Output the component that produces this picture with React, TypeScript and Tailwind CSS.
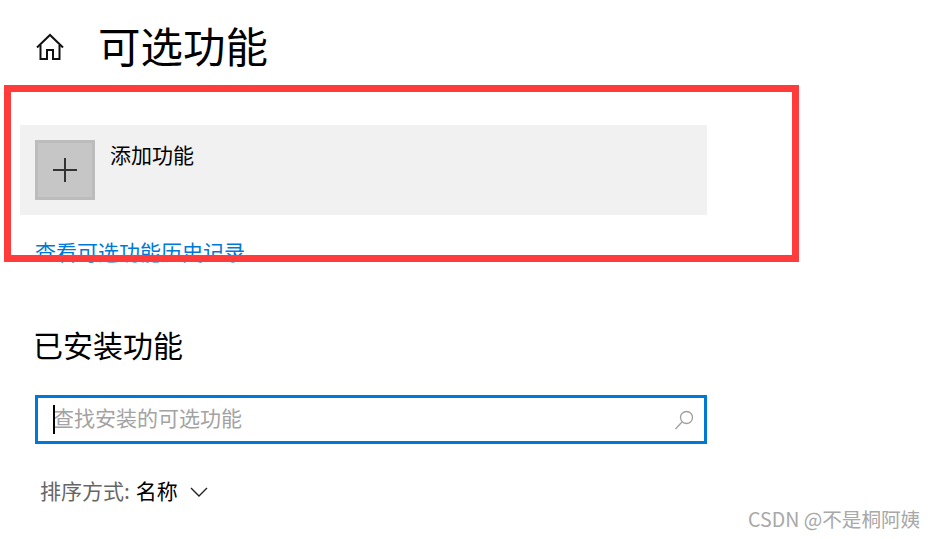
const cjk = "font-['Noto_Sans_CJK_SC','Noto_Sans',sans-serif]";

export default function App() {
  return (
    <div className={`relative w-[935px] h-[539px] overflow-hidden bg-white text-black ${cjk}`}>
      {/* Header */}
      <div className="flex items-center h-[94px] pl-[35px]">
        <svg width="30" height="30" viewBox="0 0 30 30" fill="none" stroke="#111" strokeWidth="2" className="shrink-0">
          <path d="M2 15.5 15 3l13 12.500" />
          <path d="M5.500 13v14h6.500v-9h6v9h6.500V13" />
        </svg>
        <h1 className="ml-[33px] mb-[4px] text-[42.5px] leading-none font-normal">可选功能</h1>
      </div>

      {/* Add feature */}
      <div className="ml-5 mt-[31px] flex w-[687px] h-[90px] bg-[#f1f1f1] p-[15px]">
        <div className="flex items-center justify-center w-[60px] h-[60px] bg-[#c6c6c6] border-[3px] border-[#bcbcbc]">
          <svg width="26" height="26" viewBox="0 0 26 26" stroke="#333" strokeWidth="2">
            <path d="M13 1v24M1 13h24" />
          </svg>
        </div>
        <span className="ml-[15px] text-[21px] leading-[29px]">添加功能</span>
      </div>
      <a className="block ml-[35px] mt-[21px] text-[21px] leading-[31px] text-[#0078d7]">查看可选功能历史记录</a>

      {/* Installed */}
      <h2 className="ml-[33px] mt-[55px] text-[30px] leading-[44px] font-normal">已安装功能</h2>
      <div className="relative ml-[35px] mt-[29px] flex items-center justify-between w-[672px] h-[49px] border-[3px] border-[#0078d7] pl-[15px] pr-[10px]">
        <span className="mb-[4px] text-[21px] text-[#a3a3a3] leading-none">查找安装的可选功能</span>
        <span className="absolute left-[15px] top-[7px] w-[2px] h-[29px] bg-black" />
        <svg width="20" height="20" viewBox="0 0 20 20" fill="none" stroke="#a0a0a0" strokeWidth="1.3">
          <circle cx="12.500" cy="7.500" r="6" />
          <path d="M8 12 1.500 19" />
        </svg>
      </div>
      <div className="ml-[40px] mt-[31px] flex items-center text-[21px] leading-[31px]">
        <span className="text-[#666]">排序方式:</span>
        <span className="ml-[6px]">名称</span>
        <svg width="18" height="10" viewBox="0 0 18 10" fill="none" stroke="#222" strokeWidth="1.400" className="ml-[12px] mt-[2px]">
          <path d="M1 1l8 8 8-8" />
        </svg>
      </div>

      {/* Annotation and watermark */}
      <div className="absolute left-1 top-[85px] w-[795px] h-[177px] border-[7px] border-[#ff3b3b]" />
      <span className="absolute left-[748px] top-[505px] text-[19.6px] leading-[28px] text-[#a8a8a8]">CSDN @不是桐阿姨</span>
    </div>
  );
}
